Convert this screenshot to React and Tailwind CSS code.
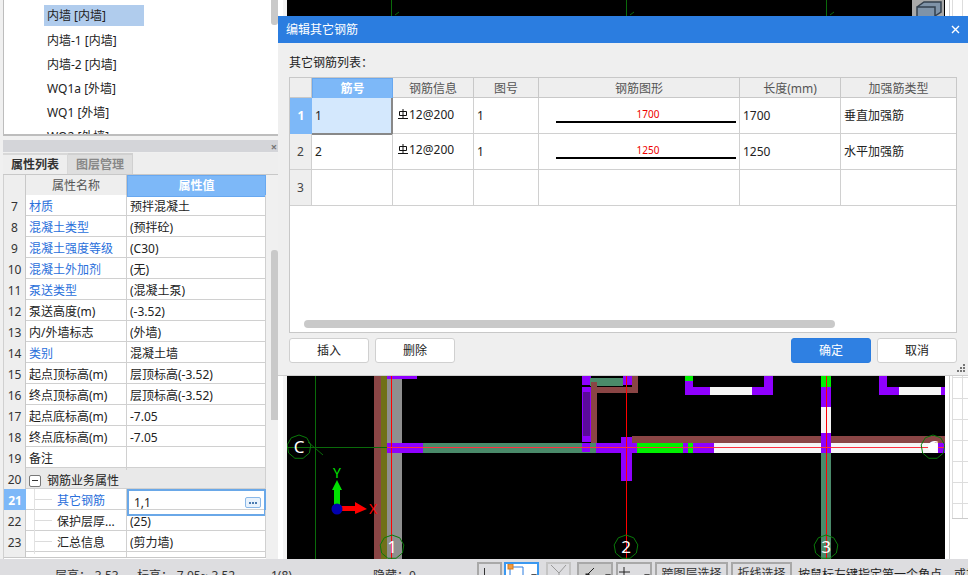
import React from 'react';

const P = '#8f00ff';
const G = '#00f000';
const T = '#4a8a6a';
const B = '#8a4545';
const W = '#f6f6f6';

// x, y, w, h, colour of the wall and column pieces on the canvas
const pieces = [
  [374, 376, 7, 183, B],
  [381, 376, 6, 183, '#707018'],
  [387, 376, 15, 183, '#8f8f8f'],
  [387, 376, 30, 3, P],
  [423, 443, 160, 10, T],
  [387, 443, 36, 10, P],
  [582, 443, 14, 10, T],
  [582, 443, 8, 9, P],
  [596, 443, 26, 10, P],
  [582, 376, 9, 9, P],
  [590, 378, 33, 8, T],
  [623, 376, 9, 9, P],
  [632, 376, 6, 11, B],
  [591, 387, 47, 6, B],
  [591, 382, 6, 61, B],
  [582, 387, 9, 55, P],
  [583, 392, 7, 44, '#5a0a9a'],
  [632, 436, 313, 7, B],
  [621, 437, 11, 44, P],
  [621, 443, 16, 10, P],
  [637, 443, 46, 10, G],
  [683, 443, 5, 10, P],
  [688, 443, 5, 10, G],
  [693, 443, 21, 10, P],
  [714, 443, 224, 10, W],
  [938, 443, 7, 10, P],
  [821, 376, 10, 11, G],
  [821, 387, 10, 20, P],
  [821, 407, 10, 26, W],
  [821, 433, 10, 20, P],
  [821, 453, 10, 106, T],
  [685, 376, 8, 5, G],
  [685, 381, 8, 6, P],
  [685, 387, 25, 8, P],
  [710, 387, 42, 8, W],
  [752, 387, 21, 8, P],
  [764, 376, 9, 11, P],
  [879, 376, 8, 11, P],
  [879, 387, 20, 8, P],
  [899, 387, 42, 8, W],
  [941, 387, 4, 8, P],
];

const axes = [
  [299, 447, 'C'],
  [392, 547, '1'],
  [626, 547, '2'],
  [826, 547, '3'],
  [933, 447, 'C'],
];

const ringPoints = (cx, cy) =>
  Array.from({ length: 9 }, (_, i) => {
    const a = (i / 9) * Math.PI * 2 - Math.PI / 2;
    return `${cx + Math.cos(a) * 12},${cy + Math.sin(a) * 12}`;
  }).join(' ');

const Canvas = () => (
  <svg viewBox="287 0 658 559" className="block h-[559px] w-[658px] bg-black">
    <g shapeRendering="crispEdges">
      {pieces.map(([x, y, w, h, c], i) => (
        <rect key={i} x={x} y={y} width={w} height={h} fill={c} />
      ))}
      <rect x="315" y="376" width="1" height="183" fill="#0a6a0a" />
      <rect x="287" y="447" width="100" height="1" fill="#0a6a0a" />
      <rect x="391" y="0" width="1" height="16" fill="#0a6a0a" />
      <rect x="626" y="0" width="1" height="16" fill="#0a6a0a" />
      <rect x="826" y="0" width="1" height="16" fill="#0a6a0a" />
      <rect x="391" y="376" width="1" height="183" fill="#ff0000" />
      <rect x="626" y="376" width="1" height="183" fill="#ff0000" />
      <rect x="826" y="376" width="1" height="183" fill="#ff0000" />
      <rect x="387" y="447" width="558" height="1" fill="#ff3040" />
      <rect x="912" y="0" width="32" height="16" fill="#a9a9a9" />
    </g>
    <path d="M308 442L323 455M395 15L399 12M630 15L634 12M830 15L834 12" stroke="#0a6a0a" fill="none" />
    <path d="M917 16V7H935V16M917 7L924 2H941V12L935 16" fill="#7f93a8" stroke="#33404e" strokeWidth="1.5" />
    {axes.map(([x, y, label]) => (
      <g key={`${x}-${label}`}>
        <polygon points={ringPoints(x, y)} fill="none" stroke="#0a7a0a" />
        <text x={x} y={y + 6} textAnchor="middle" fill="#fff" fontSize="17" fontFamily="'Noto Sans', sans-serif">
          {label}
        </text>
      </g>
    ))}
    <circle cx="933" cy="447" r="5" fill="#fff" />
    <path d="M334 509V490H332L337 480L342 490H340V509Z" fill="#00e000" />
    <path d="M337 506H355V502L367 509L355 514V511H337Z" fill="#ff0000" />
    <circle cx="337" cy="509" r="5.5" fill="#0000b0" />
    <text x="337" y="478" textAnchor="middle" fill="#00e000" fontSize="14" fontFamily="'Noto Sans', sans-serif">Y</text>
    <text x="373" y="514" textAnchor="middle" fill="#ff0000" fontSize="14" fontFamily="'Noto Sans', sans-serif">X</text>
  </svg>
);

const treeItems = ['内墙-1 [内墙]', '内墙-2 [内墙]', 'WQ1a [外墙]', 'WQ1 [外墙]', 'WQ2 [外墙]'];

const attrs = [
  ['7', '材质', '预拌混凝土', true],
  ['8', '混凝土类型', '(预拌砼)', true],
  ['9', '混凝土强度等级', '(C30)', true],
  ['10', '混凝土外加剂', '(无)', true],
  ['11', '泵送类型', '(混凝土泵)', true],
  ['12', '泵送高度(m)', '(-3.52)', false],
  ['13', '内/外墙标志', '(外墙)', false],
  ['14', '类别', '混凝土墙', true],
  ['15', '起点顶标高(m)', '层顶标高(-3.52)', false],
  ['16', '终点顶标高(m)', '层顶标高(-3.52)', false],
  ['17', '起点底标高(m)', '-7.05', false],
  ['18', '终点底标高(m)', '-7.05', false],
  ['19', '备注', '', false],
];

const TreeLine = () => (
  <span className="relative ml-[8px] mr-[5px] h-full w-[18px] shrink-0 border-l border-[#e2e2e2]">
    <span className="absolute left-0 top-[10px] w-[17px] border-t border-[#dcdcdc]" />
  </span>
);

const PropertyPanel = () => (
  <div className="flex h-[419px] flex-col">
    <div className="ml-[3px] flex h-[12px] w-[275px] items-center justify-end bg-[#d4d5d9] pr-[1px] text-[11px] font-bold leading-none text-[#777]">
      ×
    </div>
    <div className="ml-[3px] mt-[1px] flex h-[22px] w-[275px] border-b border-[#c8c8c8] bg-[#eeeeee] text-[12px] font-bold leading-[20px]">
      <div className="w-[65px] border-r border-t-2 border-[#d8d8d8] text-center text-[#333]">属性列表</div>
      <div className="w-[65px] border-r border-t-2 border-[#d0d0d0] bg-[#dedede] text-center text-[#888]">图层管理</div>
    </div>
    <div className="flex min-h-0 flex-1">
      <div className="ml-[3px] w-[263px] border-l border-[#d0d0d0] bg-white text-[12px] leading-[23px] text-[#222]">
        <div className="grid h-[20px] grid-cols-[22px_101px_139px] bg-[#eeeeee] text-center leading-[22px]">
          <div className="border-r border-[#c8c8c8]" />
          <div className="border-r border-[#c8c8c8] text-[#555]">属性名称</div>
          <div className="border border-[#68a8f0] bg-[#7db8f8] font-bold leading-[20px] text-white">属性值</div>
        </div>
        {attrs.map(([n, name, value, blue]) => (
          <div key={n} className="grid h-[21px] grid-cols-[22px_101px_139px] border-b border-[#d0d0d0]">
            <div className="border-r border-[#c8c8c8] bg-[#eeeeee] text-center text-[#333]">{n}</div>
            <div className={`border-r border-[#d0d0d0] pl-[3px] ${blue ? 'text-[#2a6fdb]' : ''}`}>{name}</div>
            <div className="border-r border-[#d0d0d0] pl-[3px]">{value}</div>
          </div>
        ))}
        <div className="grid h-[21px] grid-cols-[22px_101px_139px] border-b border-[#d0d0d0] bg-[#e9e9e9]">
          <div className="border-r border-[#c8c8c8] bg-[#eeeeee] text-center text-[#333]">20</div>
          <div className="flex items-center pl-[3px] pt-[1px]">
            <span className="mr-[6px] flex h-[12px] w-[12px] items-center justify-center rounded-[2px] border border-[#777] bg-white">
              <span className="w-[6px] border-t border-[#333]" />
            </span>
            钢筋业务属性
          </div>
          <div className="border-r border-[#d0d0d0]" />
        </div>
        <div className="grid h-[21px] grid-cols-[22px_101px_139px] border-b border-[#d0d0d0]">
          <div className="bg-[#7db8f8] text-center font-bold text-white">21</div>
          <div className="flex border-r border-[#d0d0d0] text-[#2a6fdb]">
            <TreeLine />
            其它钢筋
          </div>
          <div className="flex items-center justify-between border-2 border-[#6aa8e8] pl-[5px] pr-[3px]">
            1,1
            <span className="flex h-[11px] w-[16px] items-center justify-center gap-[1px] rounded-[2px] border border-[#8ab8e8] bg-[#e8f2fc]">
              <span className="h-[2px] w-[2px] bg-[#4a7ab0]" />
              <span className="h-[2px] w-[2px] bg-[#4a7ab0]" />
              <span className="h-[2px] w-[2px] bg-[#4a7ab0]" />
            </span>
          </div>
        </div>
        {[
          ['22', '保护层厚...', '(25)'],
          ['23', '汇总信息', '(剪力墙)'],
        ].map(([n, name, value]) => (
          <div key={n} className="grid h-[21px] grid-cols-[22px_101px_139px] border-b border-[#d0d0d0]">
            <div className="border-r border-[#c8c8c8] bg-[#eeeeee] text-center text-[#333]">{n}</div>
            <div className="flex border-r border-[#d0d0d0]">
              <TreeLine />
              {name}
            </div>
            <div className="border-r border-[#d0d0d0] pl-[3px]">{value}</div>
          </div>
        ))}
        <div className="grid h-[6px] grid-cols-[22px_101px_139px] border-b border-[#c8c8c8]">
          <div className="border-r border-[#c8c8c8] bg-[#eeeeee]" />
          <div className="border-r border-[#d0d0d0]" />
          <div className="border-r border-[#d0d0d0]" />
        </div>
      </div>
      <div className="ml-[5px] mt-[75px] h-[170px] w-[7px] rounded-t-[3px] bg-[#c9c9c9]" />
    </div>
  </div>
);

const LeftPanel = () => (
  <aside className="flex w-[287px] shrink-0">
    <div className="h-[559px] w-[278px] overflow-hidden bg-[#f0f0f0]">
      <div className="ml-[3px] flex h-[136px] w-[275px] border-b-2 border-l border-[#bdbdbd] bg-white">
        <div className="h-[134px] flex-1 overflow-hidden pl-[40px] pt-[5px] text-[12px] text-[#222]">
          <div className="h-[21px] w-[100px] whitespace-nowrap bg-[#b0cced] pl-[3px] leading-[22px]">内墙 [内墙]</div>
          <div className="mt-[2px]">
            {treeItems.map((t) => (
              <div key={t} className="h-[24px] whitespace-nowrap pl-[3px] leading-[25px]">
                {t}
              </div>
            ))}
          </div>
        </div>
        <div className="h-[25px] w-[7px] rounded-b-[3px] bg-[#c9c9c9]" />
      </div>
      <div className="mt-[4px]">
        <PropertyPanel />
      </div>
    </div>
    <div className="h-[559px] w-[9px] border-r-4 border-[#f4f4f4] bg-white" />
  </aside>
);

const RightStrip = () => (
  <div className="flex h-[559px] w-[23px] shrink-0 bg-white pl-[4px]">
    <div className="ml-0 mr-[2px] h-full border-l border-[#cccccc]" />
    <div className="h-[519px] flex-1 overflow-hidden border-b border-[#cccccc]">
      {Array.from({ length: 25 }, (_, i) => (
        <div key={i} className="flex h-[21px] border-b border-[#dddddd]">
          <div className="w-[11px] border-x border-[#dddddd]" />
          <div className="flex-1" />
        </div>
      ))}
    </div>
  </div>
);

const RebarMark = () => (
  <svg width="10" height="11" viewBox="0 0 10 11" className="mr-[1px] mt-[-4px] shrink-0" fill="none" stroke="#111">
    <path d="M1.5 6.5V2.5H8.5V6.5M1.5 6.5H8.5M5 0V9.5M0 9.5H10" />
  </svg>
);

const cols = 'grid-cols-[22px_81px_81px_65px_201px_101px_115px]';
const cell = 'border-r border-[#d0d0d0]';

const rebars = [
  ['1', '1700', '垂直加强筋'],
  ['2', '1250', '水平加强筋'],
];

const RebarRow = ({ no, len, kind, active }) => (
  <div className={`grid h-[36px] ${cols} border-b border-[#d0d0d0] leading-[35px] text-[#222]`}>
    <div className={active ? 'bg-[#7db8f8] text-center font-bold text-white' : `${cell} bg-[#eeeeee] text-center text-[#444]`}>{no}</div>
    <div className={active ? 'border-b-2 border-r-2 border-[#888] bg-[#d4e8fd] pl-[3px]' : `${cell} pl-[3px]`}>{no}</div>
    <div className={`${cell} flex items-center pl-[5px]`}>
      <RebarMark />
      <span className="mt-[-4px]">12@200</span>
    </div>
    <div className={`${cell} pl-[3px]`}>1</div>
    <div className={`${cell} pl-[17px]`}>
      <div className="mt-[9px] w-[184px] text-center text-[10px] leading-[14px] text-[#ee0000]">{len}</div>
      <div className="h-[2px] w-[180px] bg-black" />
    </div>
    <div className={`${cell} pl-[3px]`}>{len}</div>
    <div className="pl-[3px]">{kind}</div>
  </div>
);

const DlgButton = ({ children, primary }) => (
  <button
    className={`h-[25px] w-[80px] rounded-[3px] border pt-[1px] text-[12px] ${primary ? 'border-[#2b7de0] bg-[#2f80e2] text-white' : 'border-[#d0d0d0] bg-white text-[#222]'}`}
  >
    {children}
  </button>
);

const Dialog = () => (
  <div className="absolute left-[278px] top-[16px] flex h-[360px] w-[690px] flex-col border-b border-[#cfcfcf] bg-[#efefef] text-[12px]">
    <div className="flex h-[27px] shrink-0 items-center justify-between bg-[#2b7de0] pl-[8px] pr-[8px] text-white">
      <span>编辑其它钢筋</span>
      <svg width="9" height="9" viewBox="0 0 9 9" stroke="#fff" strokeWidth="1.4">
        <path d="M1 1L8 8M8 1L1 8" />
      </svg>
    </div>
    <div className="mt-[11px] h-[18px] shrink-0 pl-[11px] leading-[18px] text-[#222]">其它钢筋列表：</div>
    <div className="ml-[11px] mt-[5px] h-[256px] w-[668px] shrink-0 border border-[#c8c8c8] bg-white">
      <div className={`grid h-[20px] ${cols} border-b border-[#c8c8c8] bg-[#eeeeee] text-center leading-[21px] text-[#555]`}>
        <div className="border-r border-[#c8c8c8]" />
        <div className="border border-[#68a8f0] bg-[#7db8f8] font-bold leading-[19px] text-white">筋号</div>
        <div className="border-r border-[#c8c8c8]">钢筋信息</div>
        <div className="border-r border-[#c8c8c8]">图号</div>
        <div className="border-r border-[#c8c8c8]">钢筋图形</div>
        <div className="border-r border-[#c8c8c8]">长度(mm)</div>
        <div>加强筋类型</div>
      </div>
      {rebars.map(([no, len, kind], i) => (
        <RebarRow key={no} no={no} len={len} kind={kind} active={i === 0} />
      ))}
      <div className={`grid h-[36px] ${cols} border-b border-[#d0d0d0] leading-[35px]`}>
        <div className={`${cell} bg-[#eeeeee] text-center text-[#444]`}>3</div>
        <div className={cell} />
        <div className={cell} />
        <div className={cell} />
        <div className={cell} />
        <div className={cell} />
        <div />
      </div>
      <div className="ml-[14px] mt-[114px] h-[8px] w-[531px] rounded-[4px] bg-[#c9c9c9]" />
    </div>
    <div className="mt-[5px] flex justify-between pl-[11px] pr-[11px]">
      <div className="flex gap-[6px]">
        <DlgButton>插入</DlgButton>
        <DlgButton>删除</DlgButton>
      </div>
      <div className="flex gap-[6px]">
        <DlgButton primary>确定</DlgButton>
        <DlgButton>取消</DlgButton>
      </div>
    </div>
    <svg width="9" height="9" viewBox="0 0 9 9" fill="#777" className="absolute bottom-[2px] right-[2px]">
      <path d="M6 0h2v2H6zM3 3h2v2H3zM6 3h2v2H6zM0 6h2v2H0zM3 6h2v2H3zM6 6h2v2H6z" />
    </svg>
  </div>
);

const toolBtn = 'mt-[3px] h-[20px] shrink-0 border-2 border-[#a8a8a8]';

const StatusBar = () => (
  <div className="flex h-[16px] items-start overflow-hidden whitespace-nowrap bg-[#dddde0] text-[12px] leading-[16px] text-[#333]">
    <span className="ml-[55px] mt-[9px] w-[82px] shrink-0">层高：-3.53</span>
    <span className="mt-[9px] w-[134px] shrink-0">标高：-7.05~-3.52</span>
    <span className="mt-[9px] w-[102px] shrink-0">1(8)</span>
    <span className="mt-[9px] w-[104px] shrink-0">隐藏：0</span>
    <div className={`${toolBtn} w-[25px]`}>
      <svg width="21" height="16" viewBox="0 0 21 16" fill="none" stroke="#333">
        <path d="M5.5 4V16" />
      </svg>
    </div>
    <div className="relative mt-[3px] ml-[2px] h-[20px] w-[35px] shrink-0 border-2 border-[#3a98f0] bg-white">
      <svg width="31" height="16" viewBox="0 0 31 16" fill="none">
        <path d="M4 3H17V16M4 3V16" stroke="#2b7de0" />
        <rect x="2" y="0" width="5" height="5" fill="#f59a3c" stroke="#d07a20" />
        <path d="M25 10h6l-3 4z" fill="#555" />
      </svg>
    </div>
    <div className={`${toolBtn} ml-[7px] w-[25px] border-[#c4c4c4]`}>
      <svg width="21" height="16" viewBox="0 0 21 16" fill="none" stroke="#999">
        <path d="M3 1L11 9L18 1M11 9V16" />
      </svg>
    </div>
    <div className={`${toolBtn} ml-[6px] w-[36px] bg-[#cfcfcf]`}>
      <svg width="32" height="16" viewBox="0 0 32 16" fill="none" stroke="#222">
        <path d="M15 4L9 10" />
        <rect x="7" y="10" width="3" height="3" fill="#222" />
        <path d="M26 10h6l-3 4z" fill="#555" stroke="none" />
      </svg>
    </div>
    <div className={`${toolBtn} ml-[3px] w-[36px]`}>
      <svg width="32" height="16" viewBox="0 0 32 16" fill="none" stroke="#222">
        <path d="M6 3V13M1 8H12" />
        <path d="M26 10h6l-3 4z" fill="#555" stroke="none" />
      </svg>
    </div>
    <div className={`${toolBtn} ml-[3px] w-[73px] pt-[2px] text-center`}>跨图层选择</div>
    <div className={`${toolBtn} ml-[3px] w-[61px] pt-[2px] text-center`}>折线选择</div>
    <span className="ml-[6px] mt-[8px] text-[#222]">按鼠标左键指定第一个角点，或拾取构件图元</span>
  </div>
);

export default function App() {
  return (
    <div className="relative flex h-[575px] w-[968px] flex-col overflow-hidden bg-white font-['Noto_Sans','Noto_Sans_CJK_SC',sans-serif]">
      <div className="flex h-[559px]">
        <LeftPanel />
        <Canvas />
        <RightStrip />
      </div>
      <StatusBar />
      <Dialog />
    </div>
  );
}
